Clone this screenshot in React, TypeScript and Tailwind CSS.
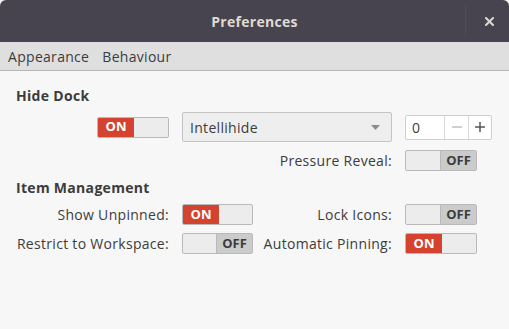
import React from "react";

function Switch({ on }: { on: boolean }) {
  return (
    <div className="flex h-[21px] w-[72px] overflow-hidden rounded-[2px] border border-[#b9b9b9] bg-[#ececec] tracking-normal">
      {on ? (
        <>
          <div className="flex w-[36px] items-center justify-center bg-[#d3432f] text-[13px] font-bold text-white">ON</div>
          <div className="flex-1" />
        </>
      ) : (
        <>
          <div className="flex-1" />
          <div className="flex w-[36px] items-center justify-center border-l border-[#b9b9b9] bg-[#cbcbcb] text-[13px] font-bold text-[#3c3c3c]">OFF</div>
        </>
      )}
    </div>
  );
}

export default function App() {
  return (
    <div
      className="h-[329px] w-[509px] overflow-hidden bg-[#f7f7f7] text-[14px] tracking-[0.3px] text-[#3c3c3c]"
      style={{ fontFamily: '"Open Sans", "Noto Sans", sans-serif' }}
    >
      <div className="relative flex h-[42px] items-center justify-center rounded-t-[6px] bg-[#48444f]">
        <span className="text-[14px] font-bold text-[#dfdbd2]">Preferences</span>
        <div className="absolute right-[43px] top-[4px] h-[34px] w-px bg-[#4f4b56]" />
        <svg className="absolute right-[15px] top-[17px]" width="9" height="9" viewBox="0 0 9 9">
          <path d="M1 1 L8 8 M8 1 L1 8" stroke="#dcd8d2" strokeWidth="2" strokeLinecap="square" />
        </svg>
      </div>
      <div className="flex h-[29px] items-center gap-[13px] border-b border-[#b6b6b6] bg-[#dfdfdf] px-[8px] text-[#3c3c3c]">
        <span>Appearance</span>
        <span>Behaviour</span>
      </div>
      <div className="px-[16px] pt-[15px]">
        <div className="h-[20px] font-bold leading-[20px]">Hide Dock</div>
        <div className="mt-[6px] grid grid-cols-[153px_71px_126px_87px] gap-x-[13px]">
          <div className="flex h-[30px] items-center justify-end">
            <Switch on={true} />
          </div>
          <div className="col-span-2 flex h-[30px] items-center justify-between rounded-[2px] border border-[#c4c4c4] bg-[#eeeeee] px-[7px]">
            <span>Intellihide</span>
            <svg width="9" height="5" viewBox="0 0 9 5" className="mr-[4px]">
              <path d="M0 0 H9 L4.5 5 Z" fill="#8c8c8c" />
            </svg>
          </div>
          <div className="flex h-[30px] items-center">
            <div className="flex h-[25px] w-[87px] rounded-[2px] border border-[#cfcfcf] bg-white">
              <div className="flex w-[38px] items-center pl-[6px]">0</div>
              <div className="flex w-[24px] items-center justify-center border-l border-[#dadada]">
                <svg width="10" height="10" viewBox="0 0 10 10"><path d="M0 5 H10" stroke="#c0c0c0" strokeWidth="1.5" /></svg>
              </div>
              <div className="flex flex-1 items-center justify-center border-l border-[#dadada]">
                <svg width="10" height="10" viewBox="0 0 10 10"><path d="M0 5 H10 M5 0 V10" stroke="#555" strokeWidth="1.5" /></svg>
              </div>
            </div>
          </div>
          <div className="col-span-3 mt-[8px] flex h-[21px] items-center justify-end">Pressure Reveal:</div>
          <div className="mt-[8px] flex h-[21px] items-center">
            <Switch on={false} />
          </div>
        </div>
        <div className="mt-[7px] h-[20px] font-bold leading-[20px]">Item Management</div>
        <div className="mt-[6px] grid grid-cols-[153px_71px_126px_87px] gap-x-[13px] gap-y-[8px]">
          <div className="flex h-[21px] items-center justify-end">Show Unpinned:</div>
          <div className="flex h-[21px] items-center"><Switch on={true} /></div>
          <div className="flex h-[21px] items-center justify-end">Lock Icons:</div>
          <div className="flex h-[21px] items-center"><Switch on={false} /></div>
          <div className="flex h-[21px] items-center justify-end whitespace-nowrap">Restrict to Workspace:</div>
          <div className="flex h-[21px] items-center"><Switch on={false} /></div>
          <div className="flex h-[21px] items-center justify-end whitespace-nowrap">Automatic Pinning:</div>
          <div className="flex h-[21px] items-center"><Switch on={true} /></div>
        </div>
      </div>
    </div>
  );
}
